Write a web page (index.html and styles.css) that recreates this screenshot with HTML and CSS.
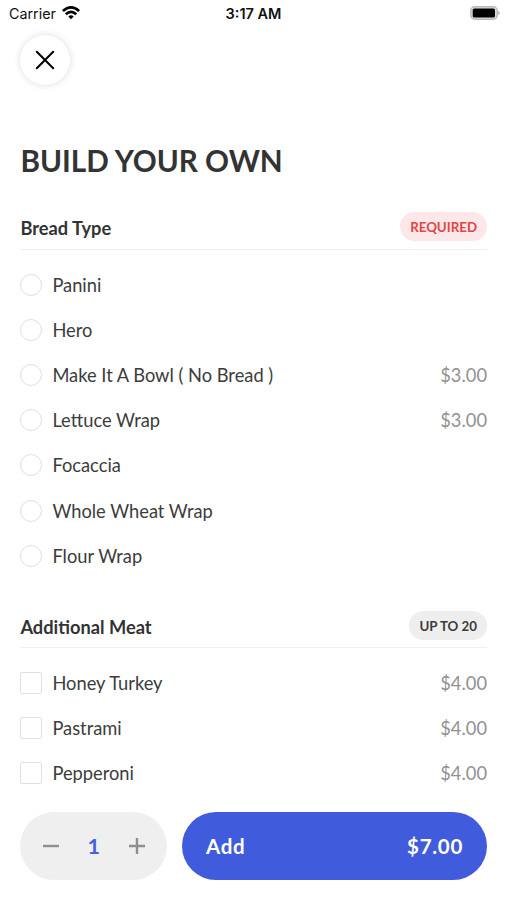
FILE: index.html
```html
<!DOCTYPE html>
<html lang="en">
<head>
<meta charset="utf-8">
<title>Build Your Own</title>
<link rel="stylesheet" href="styles.css">
</head>
<body>
<div class="screen">
  <header class="status">
    <div class="carrier"><span>Carrier</span>
      <svg width="18" height="14" viewBox="0 0 18 14" fill="none" stroke="#000" stroke-width="2.7"><path d="M.9 5.1Q9-2.2 17.1 5.1M3.8 8.3Q9 3.4 14.2 8.3"/><path d="M6.3 10.4Q9 8 11.7 10.4L9 13.2Z" fill="#000" stroke="none"/></svg>
    </div>
    <time>3:17 AM</time>
    <svg class="battery" width="30" height="14" viewBox="0 0 30 14"><rect x=".8" y=".8" width="26.4" height="12.4" rx="3.8" fill="#ddd" stroke="#bbb" stroke-width="1.5"/><rect x="2.7" y="2.5" width="22.3" height="9" rx="1.6" fill="#000"/><path d="M28.3 4.8Q29.8 5.5 29.8 7T28.3 9.2Z" fill="#aaa"/></svg>
  </header>
  <button class="close" aria-label="Close"><svg width="20" height="20" viewBox="0 0 20 20" stroke="#000" stroke-width="2" stroke-linecap="round"><path d="M1.8 1.8l16.4 16.4M18.2 1.8L1.8 18.2"/></svg></button>
  <main class="content">
    <h1>BUILD YOUR OWN</h1>
    <section class="group">
      <div class="head"><h2>Bread Type</h2><span class="tag required">REQUIRED</span></div>
      <ul>
        <li><i class="radio"></i><span>Panini</span></li>
        <li><i class="radio"></i><span>Hero</span></li>
        <li><i class="radio"></i><span>Make It A Bowl ( No Bread )</span><b>$3.00</b></li>
        <li><i class="radio"></i><span>Lettuce Wrap</span><b>$3.00</b></li>
        <li><i class="radio"></i><span>Focaccia</span></li>
        <li><i class="radio"></i><span>Whole Wheat Wrap</span></li>
        <li><i class="radio"></i><span>Flour Wrap</span></li>
      </ul>
    </section>
    <section class="group extras">
      <div class="head"><h2>Additional Meat</h2><span class="tag limit">UP TO 20</span></div>
      <ul>
        <li><i class="check"></i><span>Honey Turkey</span><b>$4.00</b></li>
        <li><i class="check"></i><span>Pastrami</span><b>$4.00</b></li>
        <li><i class="check"></i><span>Pepperoni</span><b>$4.00</b></li>
      </ul>
    </section>
  </main>
  <footer class="bar">
    <div class="stepper">
      <svg width="16" height="16" viewBox="0 0 16 16" stroke="#8f8f8f" stroke-width="2.4"><path d="M0 8h16"/></svg>
      <span>1</span>
      <svg width="16" height="16" viewBox="0 0 16 16" stroke="#8f8f8f" stroke-width="2.4"><path d="M0 8h16M8 0v16"/></svg>
    </div>
    <button class="add"><span>Add</span><span>$7.00</span></button>
  </footer>
</div>
</body>
</html>
```
FILE: styles.css
```css
* { box-sizing: border-box; margin: 0; padding: 0; }
body { background: #fff; color: #333; font-family: Lato, sans-serif; }
.screen { width: 507px; height: 900px; display: flex; flex-direction: column; overflow: hidden; }
.status { height: 27px; flex: none; display: grid; grid-template-columns: 1fr auto 1fr; align-items: center; padding: 0 7px 0 9px; font: 14.3px/27px Inter, sans-serif; color: #111; }
.carrier { display: flex; align-items: center; gap: 6px; }
.carrier svg { margin-top: -2px; }
.status time { font-size: 14.5px; font-weight: 600; margin-left: -2px; }
.battery { justify-self: end; margin-top: -1px; }
.close { flex: none; width: 50px; height: 50px; margin: 8px 0 0 20px; border: 0; border-radius: 50%; background: #fff; box-shadow: 0 0 7px rgba(0,0,0,.14); display: flex; align-items: center; justify-content: center; }
.content { flex: 1; min-height: 0; overflow: hidden; padding: 56px 20px 0 20.4px; }
h1 { font-size: 29.7px; line-height: 40px; font-weight: 700; }
.group { margin-top: 31px; }
.extras { margin-top: 33px; }
.head { height: 38px; display: flex; justify-content: space-between; align-items: flex-start; border-bottom: 1px solid #efefef; }
.extras .head { height: 37px; }
h2 { font-size: 18.25px; line-height: 33px; font-weight: 700; }
.tag { height: 29px; border-radius: 15px; padding: 0 10px; font-size: 13.3px; line-height: 30px; font-weight: 700; }
.required { background: #fee7e9; color: #df4545; }
.limit { background: #eee; color: #3c3c3c; }
ul { list-style: none; padding-top: 12px; }
li { height: 45.2px; display: flex; align-items: center; font-size: 18.3px; line-height: 22px; color: #3c3c3c; }
li b { margin-left: auto; font-weight: 400; color: #929292; }
.radio, .check { width: 22px; height: 22px; border: 1.5px solid #e0e0e0; margin-right: 10px; }
.radio { border-radius: 50%; }
.check { border-radius: 2px; }
.bar { flex: none; height: 106px; display: flex; gap: 15px; padding: 18px 20px 20px 20.4px; }
.stepper { width: 146.6px; height: 68px; border-radius: 34px; background: #efefef; display: flex; align-items: center; justify-content: space-between; padding: 0 22.3px; }
.stepper span { font-size: 21.5px; font-weight: 700; color: #4560da; }
.add { flex: 1; height: 68px; border: 0; border-radius: 34px; background: #405cdd; color: #fff; display: flex; align-items: center; justify-content: space-between; padding: 0 24px; font: 700 20.5px Lato, sans-serif; letter-spacing: .7px; }
```
